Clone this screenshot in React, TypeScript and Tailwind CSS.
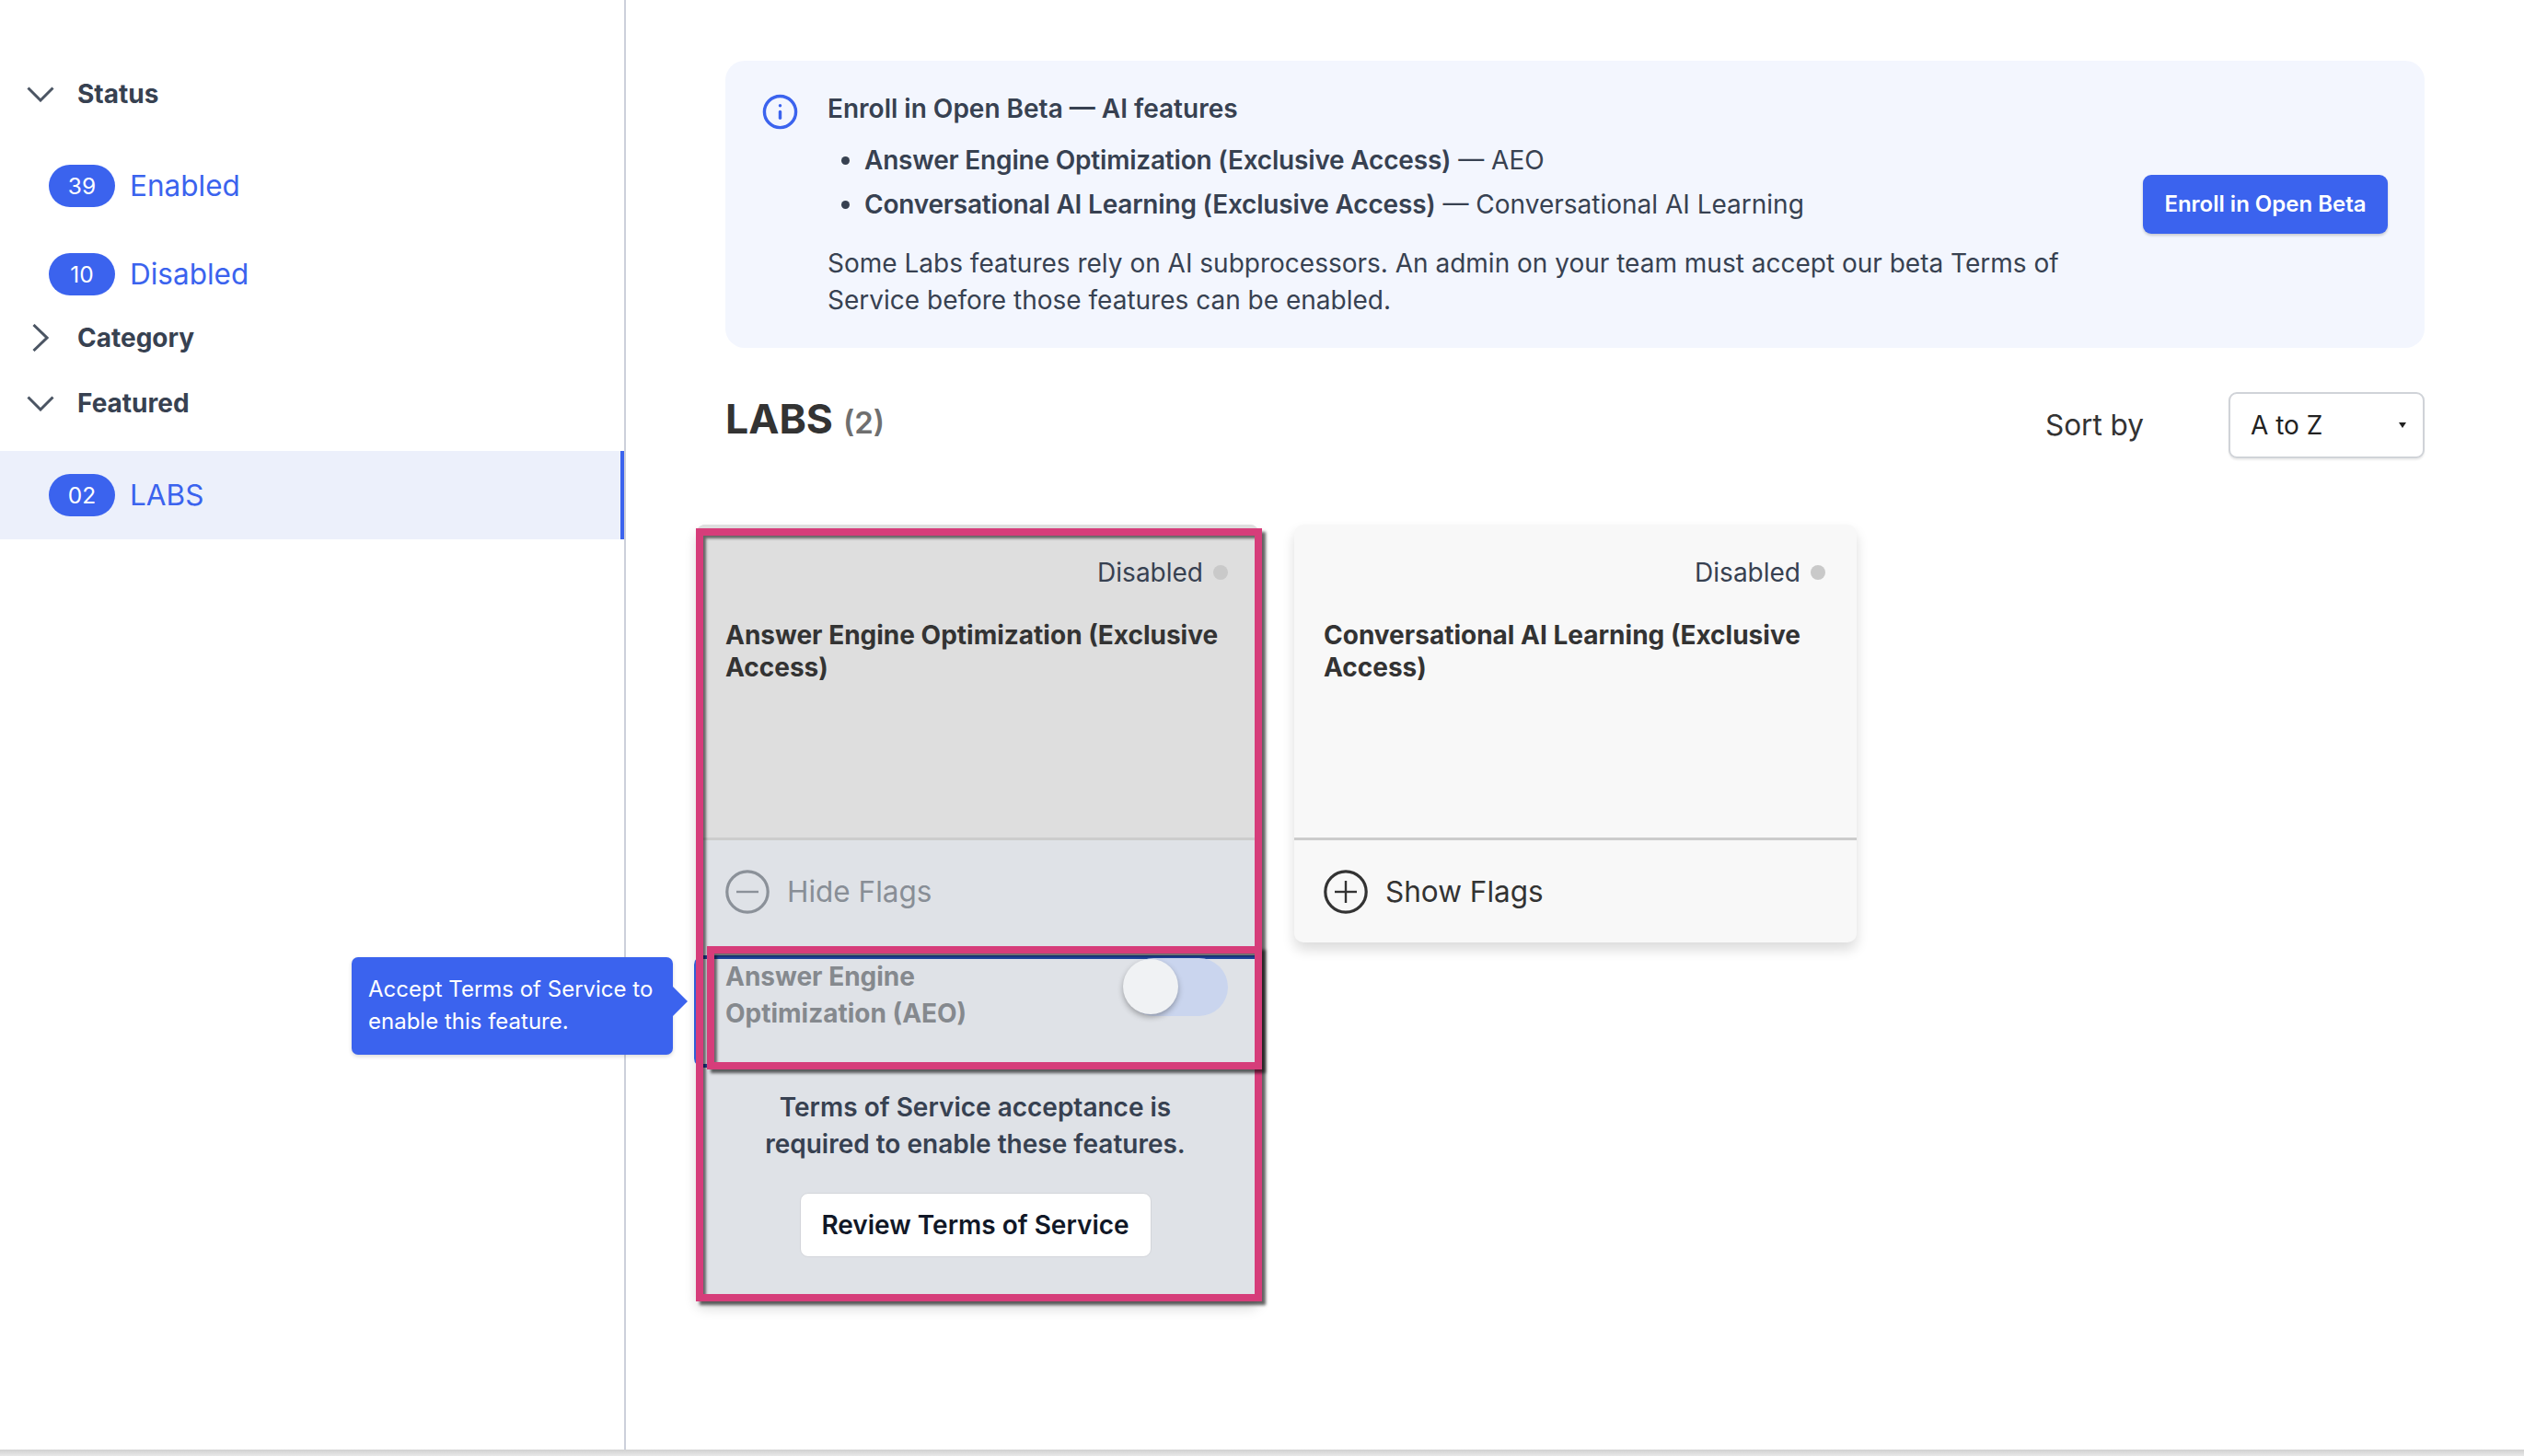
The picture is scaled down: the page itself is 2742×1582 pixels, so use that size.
import React from 'react';
import { Info } from 'lucide-react';

const ChevronDown = () => (
  <svg width="30" height="17" viewBox="0 0 30 17" fill="none" stroke="#4b5563" strokeWidth="3">
    <path d="M1.5 1.5 L15 15 L28.5 1.5" />
  </svg>
);

const ChevronRight = () => (
  <svg width="18" height="30" viewBox="0 0 18 30" fill="none" stroke="#4b5563" strokeWidth="3">
    <path d="M1.5 1 L16 15 L1.5 29" />
  </svg>
);

const RoundIcon = ({ plus, color }: { plus?: boolean; color: string }) => (
  <svg width="48" height="48" viewBox="0 0 48 48" fill="none" stroke={color} className="shrink-0">
    <circle cx="24" cy="24" r="22.2" strokeWidth="3.2" />
    <path d="M12 24 H36" strokeWidth="2.4" />
    {plus && <path d="M24 12 V36" strokeWidth="2.4" />}
  </svg>
);

const SideHeading = ({ label, open, className }: { label: string; open: boolean; className: string }) => (
  <div className={`flex items-center h-[40px] pl-[29px] ${className}`}>
    <div className="w-[30px] flex justify-center">{open ? <ChevronDown /> : <ChevronRight />}</div>
    <span className="ml-[25px] text-[28px] font-bold text-[#374151]">{label}</span>
  </div>
);

const Badge = ({ n, label }: { n: string; label: string }) => (
  <div className="flex items-center h-[46px]">
    <span className="w-[72px] h-[46px] rounded-[23px] bg-[#3b63ee] text-white text-[24.5px] leading-[46px] flex items-center justify-center">
      {n}
    </span>
    <span className="ml-[16px] text-[31.5px] leading-[46px] text-[#3b63ee]">{label}</span>
  </div>
);

const Status = () => (
  <div className="flex justify-end items-center h-[40px] pr-[34px] pt-[32px] box-content text-[28px] text-[#374151]">
    Disabled
    <span className="ml-[11px] w-[16px] h-[16px] rounded-full bg-[#c9c9c9]" />
  </div>
);

const CardTitle = ({ children }: { children: React.ReactNode }) => (
  <h3 className="mt-[31px] px-[32px] text-[28px] leading-[35px] font-bold text-[#333333]">{children}</h3>
);

const PINK = 'absolute pointer-events-none border-[8px] border-[#d63d7a] shadow-[inset_3px_3px_3px_rgba(0,0,0,0.55),4px_4px_3px_rgba(0,0,0,0.6)]';

export default function App() {
  return (
    <div className="w-[2742px] h-[1582px] bg-white font-[Inter,sans-serif] overflow-hidden">
      <div className="flex h-[1575px]">
        <aside className="w-[680px] shrink-0 border-r-2 border-[#ccd0da] pt-[82px]">
          <SideHeading label="Status" open className="" />
          <div className="pl-[53px] mt-[57px]">
            <Badge n="39" label="Enabled" />
          </div>
          <div className="pl-[53px] mt-[50px]">
            <Badge n="10" label="Disabled" />
          </div>
          <SideHeading label="Category" open={false} className="mt-[26px]" />
          <SideHeading label="Featured" open className="mt-[31px]" />
          <div className="mt-[32px] h-[96px] flex items-center pl-[53px] bg-[#ecf0fb] border-r-4 border-[#3b63ee]">
            <Badge n="02" label="LABS" />
          </div>
        </aside>

        <main className="flex-1 pt-[66px] pl-[108px] pr-[108px]">
          <section className="h-[312px] rounded-[21px] bg-[#f3f6fe] flex items-center justify-between pl-[39px] pr-[40px]">
            <div className="flex items-start h-full pt-[32px] text-[28px] leading-[40px] text-[#374151]">
              <Info size={41} strokeWidth={2} color="#3b63ee" className="mt-[3px] shrink-0" />
              <div className="ml-[31px]">
                <p className="font-semibold">Enroll in Open Beta — AI features</p>
                <ul className="mt-[16px] pl-[40px] list-disc flex flex-col gap-[8px]">
                  <li>
                    <span className="font-semibold tracking-[-0.19px]">Answer Engine Optimization (Exclusive Access)</span> — AEO
                  </li>
                  <li>
                    <span className="font-semibold tracking-[-0.19px]">Conversational AI Learning (Exclusive Access)</span> — Conversational AI Learning
                  </li>
                </ul>
                <p className="mt-[24px] w-[1370px]">
                  Some Labs features rely on AI subprocessors. An admin on your team must accept our beta Terms of Service before those features can be enabled.
                </p>
              </div>
            </div>
            <button className="w-[266px] h-[64px] rounded-[9px] bg-[#3b63ee] text-white text-[24px] font-semibold shadow-[0_2px_3px_rgba(0,0,0,0.18)]">
              Enroll in Open Beta
            </button>
          </section>

          <div className="mt-[48px] h-[72px] flex justify-between items-center">
            <h2 className="-mt-[14px] flex items-baseline text-[44.5px] font-bold text-[#333333]">
              LABS
              <span className="ml-[11px] text-[33px] font-semibold text-[#6f6f6f]">(2)</span>
            </h2>
            <div className="flex items-center">
              <span className="text-[31.5px] text-[#333333]">Sort by</span>
              <div className="ml-[92px] w-[213px] h-[72px] rounded-[9px] border-2 border-[#d0d3d8] bg-white pl-[22px] pr-[18px] flex items-center justify-between text-[28px] text-[#222222] shadow-[0_2px_2px_rgba(0,0,0,0.08)]">
                A to Z
                <span className="w-0 h-0 border-x-[4px] border-t-[6px] border-x-transparent border-t-[#222222]" />
              </div>
            </div>
          </div>

          <div className="mt-[72px] -ml-[32px] flex items-start gap-[38px]">
            <div className="relative w-[612px] h-[844px] rounded-[10px] bg-[#dfe2e7] shadow-[0_8px_14px_rgba(0,0,0,0.14)]">
              <div className="h-[340px] rounded-t-[10px] bg-[#dedede]">
                <Status />
                <CardTitle>Answer Engine Optimization (Exclusive Access)</CardTitle>
              </div>
              <div className="h-[114px] border-t-[3px] border-[#cccccc] flex items-center px-[32px] text-[31.5px] text-[#888e96]">
                <RoundIcon color="#8b9199" />
                <span className="ml-[19px]">Hide Flags</span>
              </div>
              <div className="relative -ml-[2px] w-[609px] h-[122px] rounded-l-[10px] border-y-4 border-l-4 border-y-[#1f46a0] border-l-[#2f5fd8] mt-[14px] flex justify-between items-start pl-[30px] pr-[29px] bg-[#dfe2e7]">
                <p className="-mt-[1px] text-[28px] leading-[40px] font-bold text-[#85898e] w-[340px]">
                  Answer Engine Optimization (AEO)
                </p>
                <div className="relative -mt-[1px] w-[112px] h-[63px] rounded-[32px] bg-[#cad5ee]">
                  <span className="absolute -left-[2px] top-[1px] w-[60px] h-[60px] rounded-full bg-[#f0f2f4] shadow-[0_3px_6px_rgba(0,0,0,0.3)]" />
                </div>
                <div className="absolute right-full mr-[27px] -top-[2px] w-[349px] h-[106px] rounded-[7px] bg-[#3b63ee] pl-[18px] pt-[17px] text-[24px] leading-[35px] text-white shadow-[0_2px_4px_rgba(0,0,0,0.15)]">
                  Accept Terms of Service to enable this feature.
                  <span className="absolute left-full top-[32px] w-0 h-0 border-y-[16px] border-l-[16px] border-y-transparent border-l-[#3b63ee]" />
                </div>
              </div>
              <div className="pt-[23px] pr-[5px] flex flex-col items-center">
                <p className="w-[470px] text-center text-[28px] leading-[40px] font-semibold text-[#374151]">
                  Terms of Service acceptance is required to enable these features.
                </p>
                <button className="mt-[33px] w-[382px] h-[70px] rounded-[9px] bg-white border border-[#d3d5da] text-[28px] font-semibold text-[#111827]">
                  Review Terms of Service
                </button>
              </div>
              <div className={`${PINK} left-0 top-[4px] w-[615px] h-[840px]`} />
              <div className={`${PINK} left-[12px] top-[458px] w-[603px] h-[134px]`} />
            </div>

            <div className="w-[611px] h-[454px] rounded-[10px] bg-[#f8f8f8] shadow-[0_8px_14px_rgba(0,0,0,0.14)]">
              <div className="h-[340px]">
                <Status />
                <CardTitle>Conversational AI Learning (Exclusive Access)</CardTitle>
              </div>
              <div className="h-[114px] border-t-[3px] border-[#cccccc] flex items-center px-[32px] text-[31.5px] text-[#333333]">
                <RoundIcon plus color="#333333" />
                <span className="ml-[19px]">Show Flags</span>
              </div>
            </div>
          </div>
        </main>
      </div>
      <div className="h-[7px] bg-gradient-to-b from-[#d1d1d1] to-[#e8e8e8]" />
    </div>
  );
}
